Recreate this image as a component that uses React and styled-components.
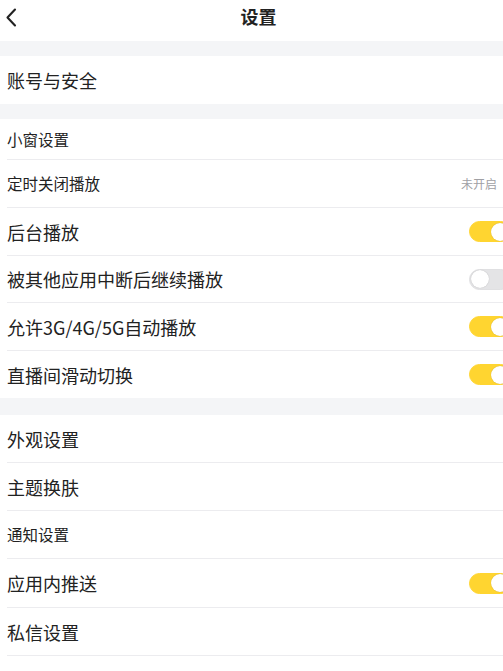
import React from "react";
import styled, { createGlobalStyle } from "styled-components";

const Global = createGlobalStyle`
  html, body { margin: 0; padding: 0; background: #fff; overflow: hidden; }
  * { box-sizing: border-box; }
  body { font-family: "Noto Sans CJK SC", "Noto Sans", sans-serif; color: #222; }
`;

const Page = styled.div`
  width: 517px;
  display: flex;
  flex-direction: column;
`;

const Header = styled.header`
  height: 41px;
  display: flex;
  align-items: flex-start;
  justify-content: center;
  position: relative;
  padding-top: 3px;
`;

const Title = styled.h1`
  margin: 0;
  font-size: 18px;
  font-weight: 700;
  line-height: 26px;
  color: #222;
`;

const Back = styled.button`
  position: absolute;
  left: 2px;
  top: 6px;
  width: 18px;
  height: 22px;
  border: 0;
  background: none;
  padding: 0;
  display: flex;
  align-items: center;
  justify-content: center;
`;

const Gap = styled.div`
  height: ${p => p.$h || 15}px;
  background: #f4f5f7;
`;

const Row = styled.div`
  height: ${p => p.$h}px;
  padding-left: 7px;
  display: flex;
`;

const RowInner = styled.div`
  flex: 1;
  display: flex;
  align-items: center;
  justify-content: space-between;
  padding-right: 6px;
  border-bottom: ${p => (p.$divider ? "1px solid #ececef" : "none")};
`;

const Label = styled.span`
  font-size: ${p => (p.$small ? "15.5px" : "18px")};
  color: #222;
  line-height: 1;
  margin-top: ${p => (p.$small ? "1px" : "0")};
`;

const Hint = styled.span`
  font-size: 12px;
  color: #a0a0a4;
  margin-right: 14px;
`;

const Toggle = styled.span`
  width: 42px;
  height: 21px;
  border-radius: 11px;
  background: ${p => (p.$on ? "#ffd530" : "#e4e4e6")};
  border: 1px solid ${p => (p.$on ? "#ffd530" : "#e0e0e2")};
  display: flex;
  align-items: center;
  justify-content: ${p => (p.$on ? "flex-end" : "flex-start")};
  padding: 0 1px;
`;

const Knob = styled.span`
  width: 18px;
  height: 18px;
  border-radius: 50%;
  background: #fff;
  box-shadow: 0 0 1px rgba(0, 0, 0, 0.25);
`;

const Item = ({ label, h = 48, small, divider = true, hint, toggle }) => (
  <Row $h={h}>
    <RowInner $divider={divider}>
      <Label $small={small}>{label}</Label>
      {hint && <Hint>{hint}</Hint>}
      {toggle !== undefined && (
        <Toggle $on={toggle}>
          <Knob />
        </Toggle>
      )}
    </RowInner>
  </Row>
);

export default function App() {
  return (
    <>
      <Global />
      <Page>
        <Header>
          <Back aria-label="返回">
            <svg width="12" height="19" viewBox="0 0 12 19">
              <path d="M10 1.5 L2.5 9.5 L10 17.5" fill="none" stroke="#222" strokeWidth="2.1" strokeLinecap="round" strokeLinejoin="round" />
            </svg>
          </Back>
          <Title>设置</Title>
        </Header>
        <Gap />
        <Item label="账号与安全" h={48} divider={false} />
        <Gap />
        <Item label="小窗设置" h={41} small />
        <Item label="定时关闭播放" h={48} small hint="未开启" />
        <Item label="后台播放" h={48} toggle={true} />
        <Item label="被其他应用中断后继续播放" h={47} toggle={false} />
        <Item label="允许3G/4G/5G自动播放" h={48} toggle={true} />
        <Item label="直播间滑动切换" h={47} toggle={true} divider={false} />
        <Gap $h={17} />
        <Item label="外观设置" h={48} />
        <Item label="主题换肤" h={48} />
        <Item label="通知设置" h={48} small />
        <Item label="应用内推送" h={49} toggle={true} />
        <Item label="私信设置" h={48} />
      </Page>
    </>
  );
}
